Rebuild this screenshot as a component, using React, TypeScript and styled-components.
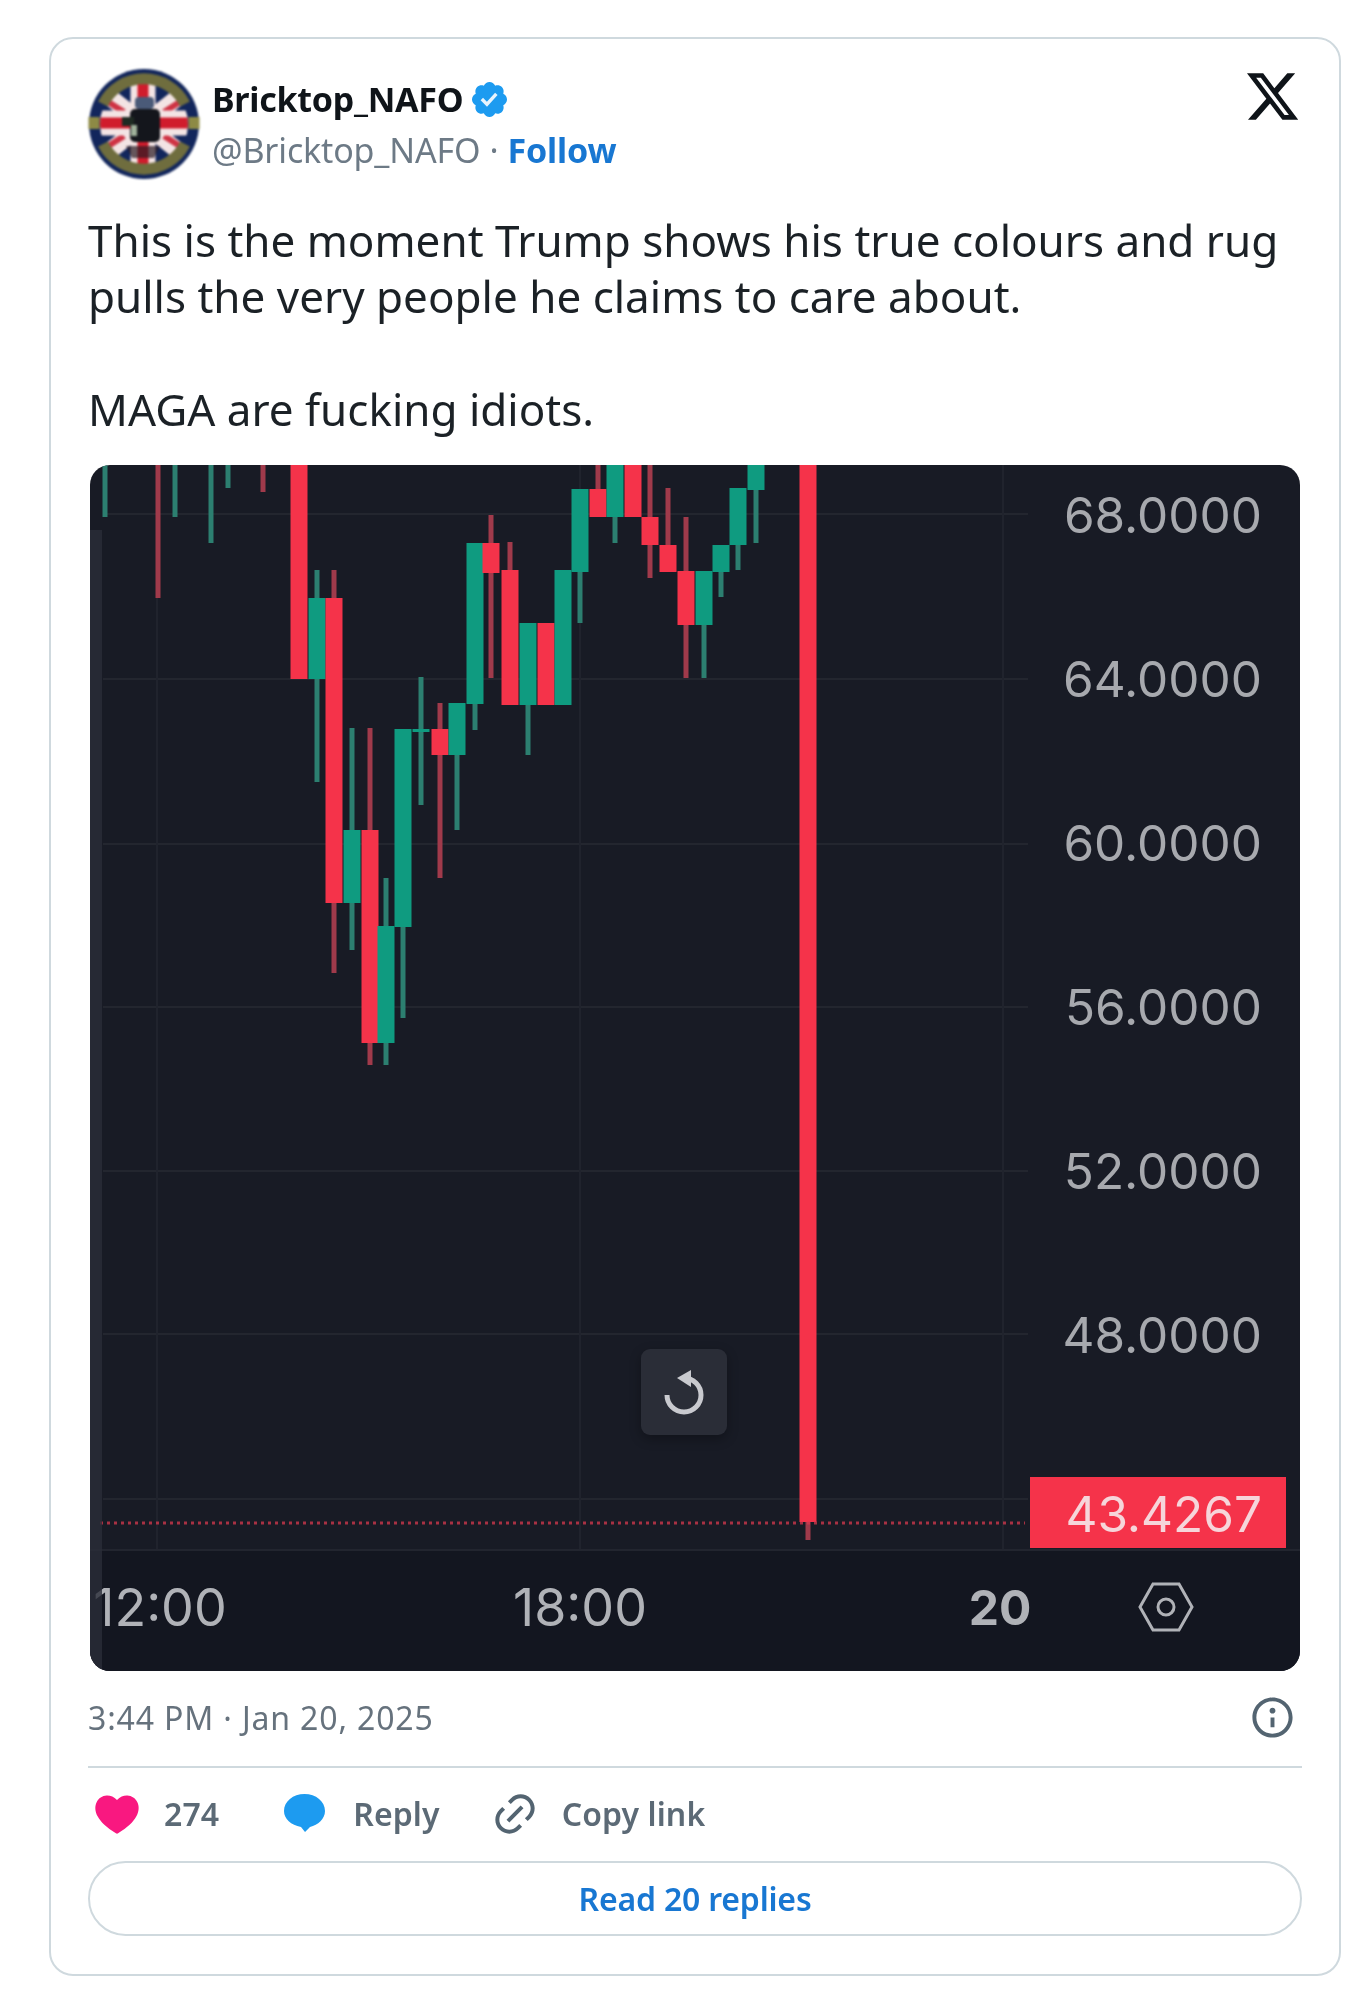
import React from "react";
import styled, { createGlobalStyle } from "styled-components";

const GlobalStyle = createGlobalStyle`
  html, body {
    margin: 0;
    padding: 0;
    background: #fff;
  }
  body {
    font-family: "Noto Sans", "Open Sans", sans-serif;
  }
`;

const Card = styled.article`
  box-sizing: border-box;
  width: 1292px;
  margin: 37px 0 0 49px;
  padding: 29px 37px 38px;
  border: 2px solid #cfd9de;
  border-radius: 24px;
  background: #fff;
  filter: blur(0.6px);
`;

const Header = styled.header`
  display: flex;
  align-items: flex-start;
  height: 112px;
`;

const Avatar = styled.svg`
  width: 112px;
  height: 112px;
  flex: none;
  filter: blur(1.1px);
`;

const Author = styled.div`
  display: flex;
  flex-direction: column;
  margin-left: 12px;
  flex: 1;
`;

const NameRow = styled.div`
  display: flex;
  align-items: center;
  gap: 6px;
  height: 50px;
  margin-top: 6px;
`;

const Name = styled.span`
  font-size: 34px;
  font-weight: 700;
  letter-spacing: -0.27px;
  color: #0f1419;
`;

const Verified = styled.svg`
  width: 41px;
  height: 41px;
  fill: #1d9bf0;
`;

const HandleRow = styled.div`
  display: flex;
  align-items: center;
  height: 50px;
  margin-top: 1px;
  font-size: 34px;
  letter-spacing: -0.15px;
  color: #6d7a86;
`;

const Follow = styled.span`
  font-weight: 700;
  color: #1877d2;
`;

const Dot = styled.span`
  margin: 0 9px;
`;

const Logo = styled.svg`
  width: 57px;
  height: 57px;
  flex: none;
  margin-right: 1px;
  fill: #0f1419;
`;

const TweetText = styled.p`
  margin: 32px 0 27px;
  font-size: 44px;
  line-height: 56.4px;
  letter-spacing: 0;
  color: #1b2126;
  white-space: pre-line;
`;

const Chart = styled.div`
  position: relative;
  height: 1206px;
  margin: 0 2px;
  border-radius: 20px;
  overflow: hidden;
  background: #181b25;
`;

const ChartDrawing = styled.svg`
  display: block;
  width: 100%;
  height: 100%;
`;

const Candles = styled.g`
  filter: blur(0.7px);
`;

const PriceLabel = styled.text`
  font-family: Inter, sans-serif;
  font-size: 49.5px;
  fill: #a7a9ae;
  text-anchor: end;
`;

const LastPrice = styled(PriceLabel)`
  fill: #f6d5da;
`;

const TimeLabel = styled.text<{ $bold?: boolean }>`
  font-family: Inter, sans-serif;
  font-size: ${({ $bold }) => ($bold ? 48 : 52)}px;
  font-weight: ${({ $bold }) => ($bold ? 700 : 400)};
  fill: #b0b2b7;
  text-anchor: middle;
`;

const ResetButton = styled.div`
  position: absolute;
  left: 551px;
  top: 884px;
  width: 86px;
  height: 86px;
  border-radius: 9px;
  background: #2a2d37;
  box-shadow: 0 4px 12px rgba(0, 0, 0, 0.3);
  display: flex;
  align-items: center;
  justify-content: center;
`;

const MetaRow = styled.div`
  display: flex;
  align-items: center;
  justify-content: space-between;
  height: 48px;
  margin-top: 23px;
  padding-bottom: 24px;
  border-bottom: 2px solid #cfd9de;
`;

const Timestamp = styled.span`
  font-size: 32px;
  letter-spacing: 0.85px;
  color: #66727d;
`;

const InfoIcon = styled.svg`
  width: 47px;
  height: 47px;
  margin-right: 6px;
  fill: #536471;
`;

const Actions = styled.div`
  display: flex;
  align-items: center;
  height: 50px;
  margin-top: 21px;
`;

const Action = styled.div<{ $gap: number; $left: number }>`
  display: flex;
  align-items: center;
  gap: ${({ $gap }) => $gap}px;
  margin-left: ${({ $left }) => $left}px;
  font-size: 32px;
  font-weight: 600;
  letter-spacing: 0.1px;
  color: #5c6a76;
`;

const ActionIcon = styled.svg<{ $size: number; $color: string }>`
  width: ${({ $size }) => $size}px;
  height: ${({ $size }) => $size}px;
  fill: ${({ $color }) => $color};
`;

const RepliesButton = styled.div`
  display: flex;
  align-items: center;
  justify-content: center;
  height: 75px;
  margin-top: 22px;
  box-sizing: border-box;
  border: 2px solid #cfd9de;
  border-radius: 38px;
  font-size: 32px;
  font-weight: 600;
  letter-spacing: -0.2px;
  color: #1877d2;
`;

type Candle = {
  x: number;
  top: number;
  bottom: number;
  wickTop: number;
  wickBottom: number;
  up: boolean;
};

// [x, bodyTop, bodyBottom, wickTop, wickBottom, up]
const RAW_CANDLES: [number, number, number, number, number, boolean][] = [
  [105, 465, 465, 465, 517, true],
  [158, 465, 465, 465, 598, false],
  [175, 465, 465, 465, 517, true],
  [211, 465, 465, 465, 543, true],
  [228, 465, 465, 465, 488, true],
  [263, 465, 465, 465, 492, false],
  [299, 465, 679, 465, 679, false],
  [317, 598, 679, 570, 782, true],
  [334, 598, 903, 570, 973, false],
  [352, 830, 903, 728, 950, true],
  [370, 830, 1043, 728, 1065, false],
  [386, 926, 1043, 878, 1065, true],
  [403, 729, 927, 729, 1018, true],
  [421, 729, 732, 677, 805, true],
  [440, 729, 755, 703, 878, false],
  [457, 703, 755, 703, 830, true],
  [475, 543, 704, 543, 730, true],
  [491, 543, 573, 515, 678, false],
  [510, 570, 705, 542, 705, false],
  [528, 623, 705, 623, 755, true],
  [546, 623, 705, 623, 705, false],
  [563, 570, 705, 570, 705, true],
  [580, 489, 572, 489, 623, true],
  [598, 489, 517, 465, 517, false],
  [615, 465, 517, 465, 543, true],
  [633, 465, 517, 465, 517, false],
  [650, 517, 545, 465, 578, false],
  [668, 545, 572, 488, 572, false],
  [686, 571, 625, 517, 678, false],
  [704, 571, 625, 571, 678, true],
  [721, 545, 572, 545, 597, true],
  [738, 488, 545, 488, 570, true],
  [756, 465, 490, 465, 543, true],
  [808, 465, 1522, 465, 1540, false],
];

const CANDLES: Candle[] = RAW_CANDLES.map(([x, top, bottom, wickTop, wickBottom, up]) => ({
  x,
  top,
  bottom,
  wickTop,
  wickBottom,
  up,
}));

const GRID_ROWS = [514, 679, 844, 1007, 1171, 1334, 1499];
const GRID_COLUMNS = [157, 580, 1003];

const PRICES = [
  { label: "68.0000", y: 515 },
  { label: "64.0000", y: 679 },
  { label: "60.0000", y: 843 },
  { label: "56.0000", y: 1007 },
  { label: "52.0000", y: 1171 },
  { label: "48.0000", y: 1335 },
];

const UP = "#0f9b80";
const DOWN = "#f5334a";

function PriceChart() {
  return (
    <Chart>
      {/* viewBox is in page pixels so the candle data reads off the screenshot */}
      <ChartDrawing viewBox="90 465 1210 1206">
        <rect x="90" y="1550" width="1210" height="121" fill="#131620" />
        {GRID_ROWS.map((y) => (
          <line key={y} x1="103" x2="1028" y1={y} y2={y} stroke="#23262f" strokeWidth="2" />
        ))}
        {GRID_COLUMNS.map((x) => (
          <line key={x} x1={x} x2={x} y1="465" y2="1550" stroke="#20232d" strokeWidth="2" />
        ))}
        <line x1="90" x2="1300" y1="1550" y2="1550" stroke="#22252f" strokeWidth="2" />

        <Candles>
          {CANDLES.map((c) => (
            <g key={c.x}>
              <rect
                x={c.x - 2.5}
                y={c.wickTop}
                width="5"
                height={c.wickBottom - c.wickTop}
                fill={c.up ? "#2c7f70" : "#a03a4b"}
              />
              <rect
                x={c.x - 8.5}
                y={c.top}
                width="17"
                height={c.bottom - c.top}
                fill={c.up ? UP : DOWN}
              />
            </g>
          ))}
        </Candles>

        <line
          x1="100"
          x2="1025"
          y1="1523"
          y2="1523"
          stroke="#d9394e"
          strokeWidth="3"
          strokeDasharray="3 4"
          opacity="0.75"
        />

        {PRICES.map((p) => (
          <PriceLabel key={p.label} x="1262" y={p.y + 18}>
            {p.label}
          </PriceLabel>
        ))}
        <rect x="1030" y="1477" width="256" height="71" fill="#f5334a" />
        <LastPrice x="1262" y="1532">
          43.4267
        </LastPrice>

        <TimeLabel x="160" y="1626">
          12:00
        </TimeLabel>
        <TimeLabel x="580" y="1626">
          18:00
        </TimeLabel>
        <TimeLabel x="1000" y="1625" $bold>
          20
        </TimeLabel>
        <rect x="90" y="530" width="12" height="1141" fill="#2a2d38" opacity="0.8" />

        <path
          d="M1140 1607 L1153 1584 H1179 L1192 1607 L1179 1630 H1153 Z"
          fill="none"
          stroke="#b0b2b7"
          strokeWidth="3"
        />
        <circle cx="1166" cy="1607" r="8" fill="none" stroke="#b0b2b7" strokeWidth="3" />
      </ChartDrawing>
      <ResetButton>
        <svg width="86" height="86" viewBox="0 0 86 86">
          <path
            d="M43 29 A17 17 0 1 1 26 46"
            fill="none"
            stroke="#c9cacf"
            strokeWidth="5"
          />
          <path d="M50 21 L36 29 L50 38 Z" fill="#c9cacf" />
        </svg>
      </ResetButton>
    </Chart>
  );
}

function CrestAvatar() {
  return (
    <Avatar viewBox="0 0 112 112">
      <circle cx="56" cy="56" r="55" fill="#12265c" />
      <clipPath id="crest-inner">
        <circle cx="56" cy="56" r="44" />
      </clipPath>
      <g clipPath="url(#crest-inner)">
        <rect width="112" height="112" fill="#12265c" />
        <path d="M10 20 L102 92 M102 20 L10 92" stroke="#f3e4e4" strokeWidth="17" />
        <path d="M14 30 L36 44 M98 30 L76 44 M14 82 L36 68 M98 82 L76 68" stroke="#cf3344" strokeWidth="6" />
        <path d="M55 8 V104 M8 55 H104" stroke="#f3e4e4" strokeWidth="25" />
        <path d="M55 8 V104 M8 55 H104" stroke="#d01c2c" strokeWidth="11" />
        <rect x="47" y="29" width="19" height="12" rx="4" fill="#4a5a78" />
        <rect x="42" y="41" width="30" height="33" rx="5" fill="#14161c" />
        <rect x="34" y="49" width="12" height="9" fill="#1e2a22" />
        <rect x="43" y="57" width="6" height="11" fill="#9fb09a" />
        <path d="M38 78 L72 78 L66 90 L44 90 Z" fill="#2a1a22" opacity="0.7" />
      </g>
      <path d="M15 36 A46 46 0 0 1 97 36" fill="none" stroke="#6f6d3e" strokeWidth="11" />
      <path d="M15 76 A46 46 0 0 0 97 76" fill="none" stroke="#6f6d3e" strokeWidth="11" />
      <path d="M6 49 V61 M106 49 V61" stroke="#8d8a45" strokeWidth="11" />
    </Avatar>
  );
}

export default function App() {
  return (
    <>
      <GlobalStyle />
      <Card>
        <Header>
          <CrestAvatar />
          <Author>
            <NameRow>
              <Name>Bricktop_NAFO</Name>
              <Verified viewBox="0 0 24 24">
                <circle cx="12" cy="12" r="7" fill="#e8f4fd" />
                <path d="M22.25 12c0-1.43-.88-2.67-2.19-3.34.46-1.39.2-2.9-.81-3.91s-2.52-1.27-3.91-.81c-.66-1.31-1.91-2.19-3.34-2.19s-2.67.88-3.33 2.19c-1.4-.46-2.91-.2-3.92.81s-1.26 2.52-.8 3.91c-1.31.67-2.2 1.91-2.2 3.34s.89 2.67 2.2 3.34c-.46 1.39-.21 2.9.8 3.91s2.52 1.26 3.91.81c.67 1.31 1.91 2.19 3.34 2.19s2.68-.88 3.34-2.19c1.39.45 2.9.2 3.91-.81s1.27-2.52.81-3.91c1.31-.67 2.19-1.91 2.19-3.34zm-11.71 4.2L6.8 12.46l1.41-1.42 2.26 2.26 4.8-5.23 1.47 1.36-6.2 6.77z" />
              </Verified>
            </NameRow>
            <HandleRow>
              @Bricktop_NAFO
              <Dot>·</Dot>
              <Follow>Follow</Follow>
            </HandleRow>
          </Author>
          <Logo viewBox="0 0 24 24">
            <path d="M18.244 2.25h3.308l-7.227 8.26 8.502 11.24H16.17l-5.214-6.817L4.99 21.75H1.68l7.73-8.835L1.254 2.25H8.08l4.713 6.231zm-1.161 17.52h1.833L7.084 4.126H5.117z" />
          </Logo>
        </Header>

        <TweetText>
          {"This is the moment Trump shows his true colours and rug\npulls the very people he claims to care about.\n\nMAGA are fucking idiots."}
        </TweetText>

        <PriceChart />

        <MetaRow>
          <Timestamp>3:44 PM · Jan 20, 2025</Timestamp>
          <InfoIcon viewBox="0 0 24 24">
            <path d="M13.5 8.5c0 .83-.67 1.5-1.5 1.5s-1.5-.67-1.5-1.5S11.17 7 12 7s1.5.67 1.5 1.5zM13 17v-5h-2v5h2zm-1 5.25c5.66 0 10.25-4.59 10.25-10.25S17.66 1.75 12 1.75 1.75 6.34 1.75 12 6.34 22.25 12 22.25zM20.25 12c0 4.56-3.69 8.25-8.25 8.25S3.75 16.56 3.75 12 7.44 3.75 12 3.75 20.25 7.44 20.25 12z" />
          </InfoIcon>
        </MetaRow>

        <Actions>
          <Action $gap={21} $left={3}>
            <ActionIcon $size={52} $color="#f91880" viewBox="0 0 24 24">
              <path d="M20.884 13.19c-1.351 2.48-4.001 5.12-8.379 7.67l-.503.3-.504-.3c-4.379-2.55-7.029-5.19-8.382-7.67-1.36-2.5-1.41-4.86-.514-6.67.887-1.79 2.647-2.91 4.601-3.01 1.651-.09 3.368.56 4.798 2.01 1.429-1.45 3.146-2.1 4.796-2.01 1.954.1 3.714 1.22 4.601 3.01.896 1.81.846 4.17-.514 6.67z" />
            </ActionIcon>
            274
          </Action>
          <Action $gap={28} $left={65}>
            <ActionIcon $size={41} $color="#1d9bf0" viewBox="0 0 41 41">
              <path d="M20.5 1 C32 1 41 8.5 41 18 C41 26 34 32 26 34 L21 39 L17 34 C7 32 0 26 0 18 C0 8.5 9 1 20.5 1 Z" />
            </ActionIcon>
            Reply
          </Action>
          <Action $gap={23} $left={51}>
            <ActionIcon $size={48} $color="#536471" viewBox="0 0 24 24">
              <path d="M18.36 5.64c-1.95-1.96-5.11-1.96-7.07 0L9.88 7.05 8.46 5.64l1.42-1.42c2.73-2.73 7.16-2.73 9.9 0 2.73 2.74 2.73 7.17 0 9.9l-1.42 1.42-1.41-1.42 1.41-1.41c1.96-1.96 1.96-5.12 0-7.07zm-2.12 3.53l-7.07 7.07-1.41-1.41 7.07-7.07 1.41 1.41zm-12.02.71l1.42-1.42 1.41 1.42-1.41 1.41c-1.96 1.96-1.96 5.12 0 7.07 1.95 1.96 5.11 1.96 7.07 0l1.41-1.41 1.42 1.41-1.42 1.42c-2.73 2.73-7.16 2.73-9.9 0-2.73-2.74-2.73-7.17 0-9.9z" />
            </ActionIcon>
            Copy link
          </Action>
        </Actions>

        <RepliesButton>Read 20 replies</RepliesButton>
      </Card>
    </>
  );
}
